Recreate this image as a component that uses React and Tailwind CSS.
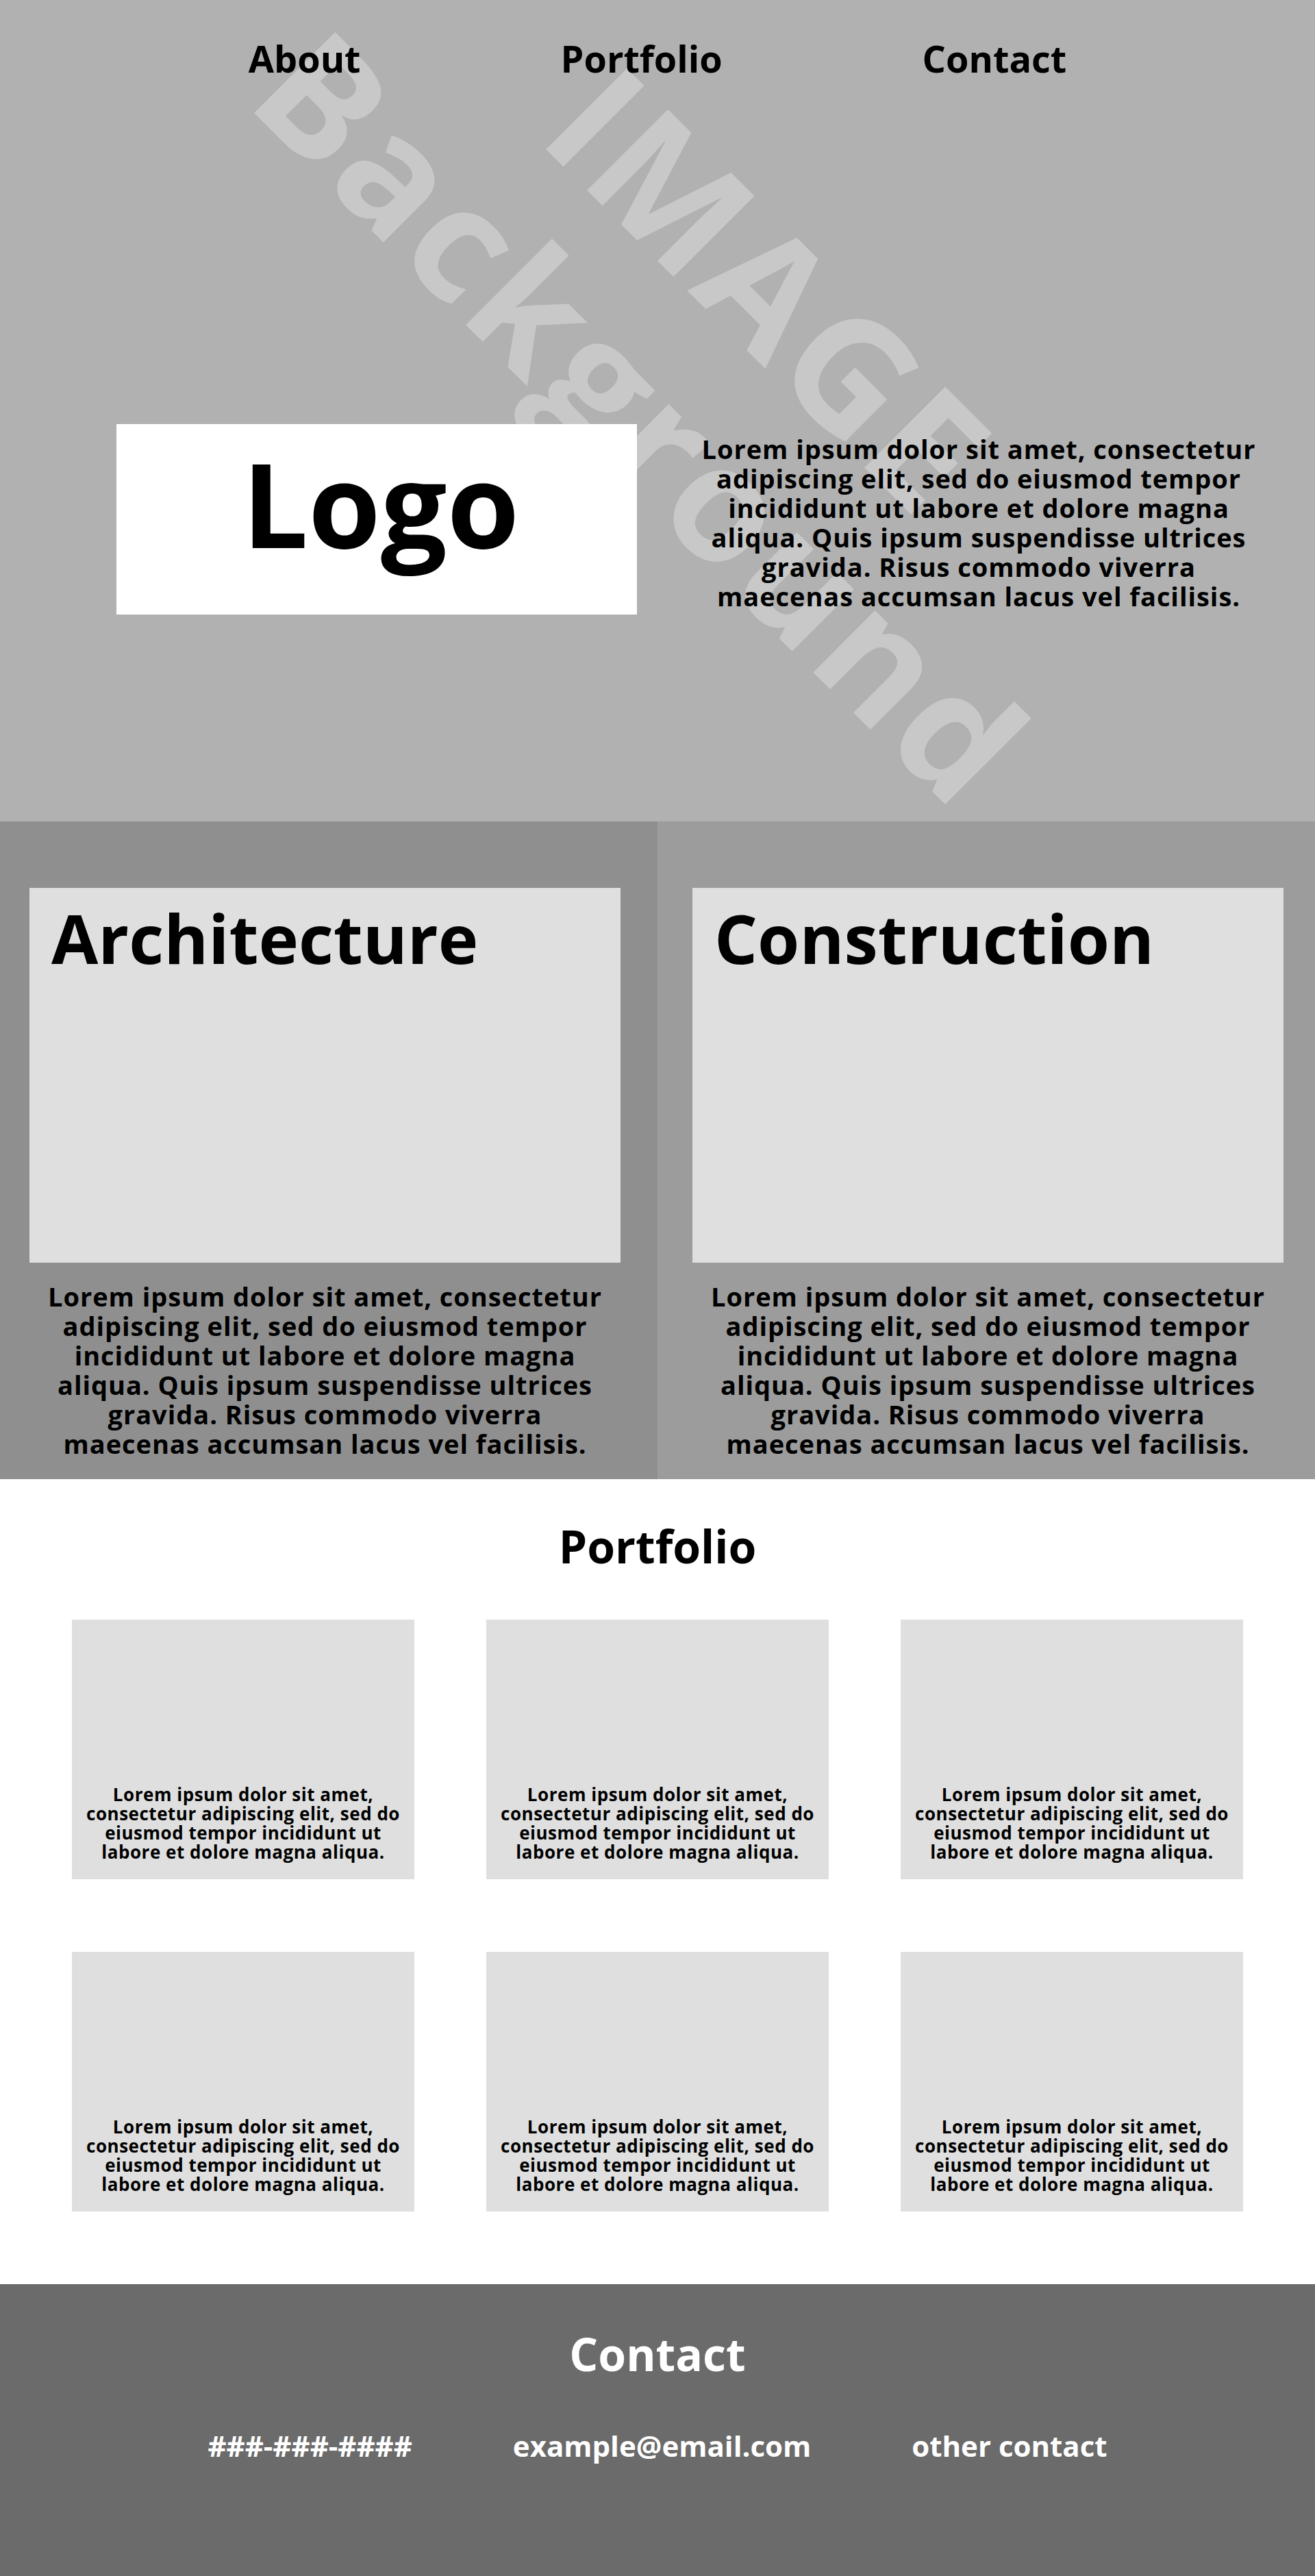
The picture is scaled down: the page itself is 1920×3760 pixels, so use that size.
const LOREM = [
  "Lorem ipsum dolor sit amet, consectetur",
  "adipiscing elit, sed do eiusmod tempor",
  "incididunt ut labore et dolore magna",
  "aliqua. Quis ipsum suspendisse ultrices",
  "gravida. Risus commodo viverra",
  "maecenas accumsan lacus vel facilisis.",
];

const SHORT_LOREM = [
  "Lorem ipsum dolor sit amet,",
  "consectetur adipiscing elit, sed do",
  "eiusmod tempor incididunt ut",
  "labore et dolore magna aliqua.",
];

const Lines = ({ lines }) =>
  lines.map((line, i) => (
    <span key={i} className="block">
      {line}
    </span>
  ));

const ServiceColumn = ({ title, bg, offset }) => (
  <div className={`w-1/2 pt-[97px] ${bg} ${offset}`}>
    <div className="h-[547px] w-[863px] bg-[#dfdfdf] px-[32px] pt-[23px]">
      <h2 className="text-[99px] font-bold leading-none">{title}</h2>
    </div>
    <p className="mt-[28px] w-[863px] text-center text-[38px] font-bold leading-[43px] tracking-[0.025em]">
      <Lines lines={LOREM} />
    </p>
  </div>
);

const PortfolioCard = () => (
  <div className="flex h-[379px] flex-col justify-end bg-[#dfdfdf] pb-[26px] text-center text-[26px] font-bold leading-[28px] tracking-[0.02em]">
    <Lines lines={SHORT_LOREM} />
  </div>
);

export default function App() {
  return (
    <div className="w-[1920px] font-['Open_Sans',sans-serif] text-black">
      {/* hero with image placeholder */}
      <section className="relative h-[1199px] overflow-hidden bg-[#b1b1b1]">
        <div className="pointer-events-none absolute left-[234px] top-[250px] w-[1600px] rotate-45 text-center text-[234px] font-bold leading-[264px] tracking-[0.03em] text-[#c8c8c8]">
          IMAGE
          <br />
          Background
        </div>

        <nav className="relative flex justify-center gap-[292px] pt-[58px] text-[54px] font-bold leading-none">
          <a href="#about">About</a>
          <a href="#portfolio">Portfolio</a>
          <a href="#contact">Contact</a>
        </nav>

        <div className="relative mt-[507px] flex items-start pl-[170px]">
          <div className="flex h-[278px] w-[760px] justify-center bg-white pl-[12px] pt-[29px]">
            <span className="text-[171px] font-bold leading-none">Logo</span>
          </div>
          <p className="ml-[40px] mt-[15px] w-[918px] text-center text-[38px] font-bold leading-[43px] tracking-[0.025em]">
            <Lines lines={LOREM} />
          </p>
        </div>
      </section>

      {/* services */}
      <section id="about" className="flex h-[960px]">
        <ServiceColumn title="Architecture" bg="bg-[#8f8f8f]" offset="pl-[43px]" />
        <ServiceColumn title="Construction" bg="bg-[#9c9c9c]" offset="pl-[51px]" />
      </section>

      {/* portfolio */}
      <section id="portfolio" className="bg-white pb-[106px] pt-[64px]">
        <h2 className="text-center text-[66px] font-bold leading-none">Portfolio</h2>
        <div className="mt-[75px] grid grid-cols-3 gap-x-[105px] gap-y-[106px] px-[105px]">
          {Array.from({ length: 6 }).map((_, i) => (
            <PortfolioCard key={i} />
          ))}
        </div>
      </section>

      {/* contact */}
      <section id="contact" className="h-[426px] bg-[#6b6b6b] pt-[68px] text-white">
        <h2 className="text-center text-[66px] font-bold leading-none">Contact</h2>
        <div className="mt-[81px] flex justify-center gap-[147px] text-[42px] font-bold leading-none">
          <span>###-###-####</span>
          <span>example@email.com</span>
          <span>other contact</span>
        </div>
      </section>
    </div>
  );
}
